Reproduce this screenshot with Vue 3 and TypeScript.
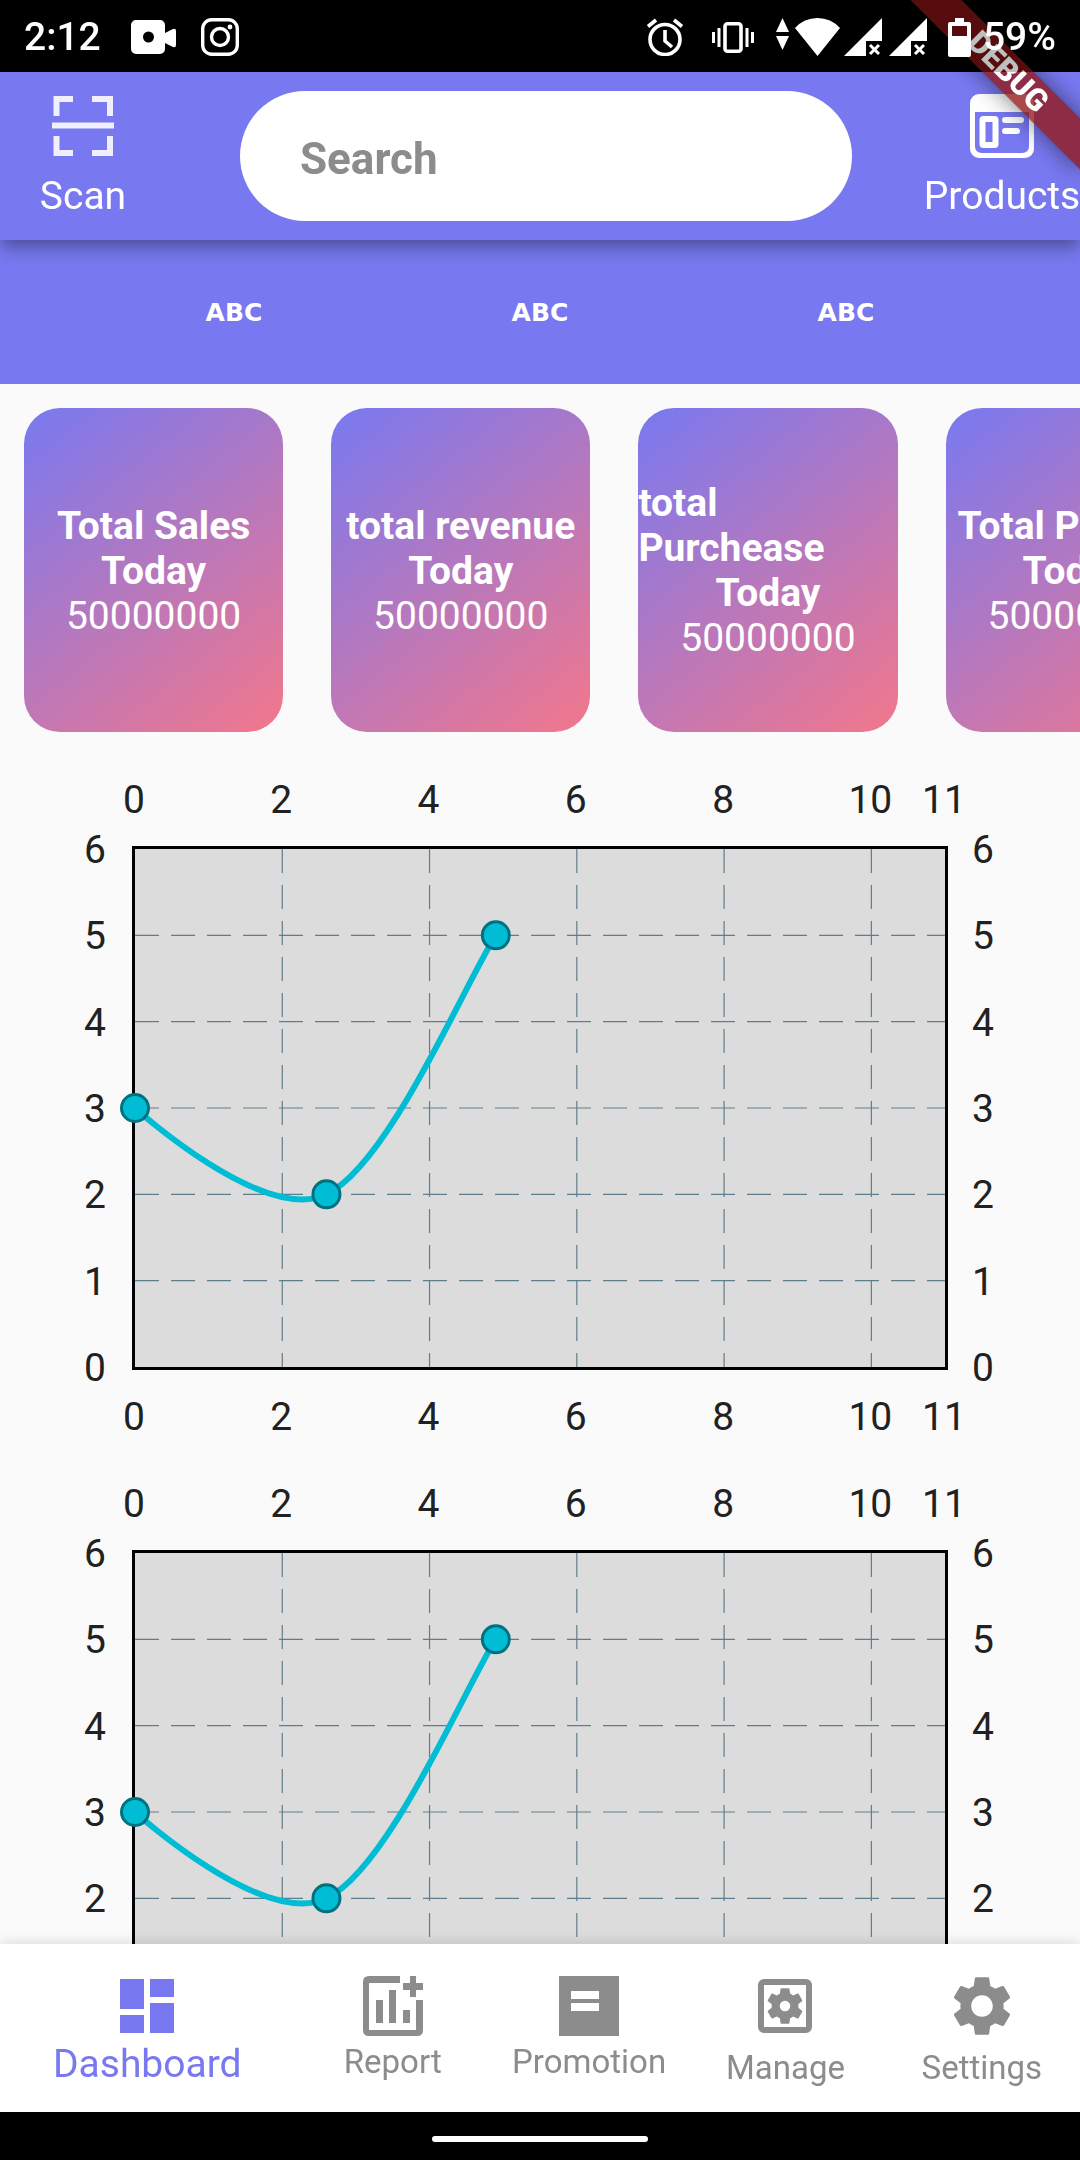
<script setup lang="ts">
import { ref } from 'vue'

interface Stat {
  title: string
  period: string
  value: string
}

interface NavItem {
  id: string
  label: string
}

const query = ref('')
const current = ref('dashboard')

const tabs = [1, 2, 3]

const stats: Stat[] = [
  { title: 'Total Sales', period: 'Today', value: '50000000' },
  { title: 'total revenue', period: 'Today', value: '50000000' },
  { title: 'total Purchease', period: 'Today', value: '50000000' },
  { title: 'Total Product', period: 'Today', value: '50000000' },
]

const navItems: NavItem[] = [
  { id: 'dashboard', label: 'Dashboard' },
  { id: 'report', label: 'Report' },
  { id: 'promotion', label: 'Promotion' },
  { id: 'manage', label: 'Manage' },
  { id: 'settings', label: 'Settings' },
]

const gearPath =
  'M19.14 12.94c.04-.3.06-.61.06-.94 0-.32-.02-.64-.07-.94l2.03-1.58c.18-.14.23-.41.12-.61l-1.92-3.32c-.12-.22-.37-.29-.59-.22l-2.39.96c-.5-.38-1.03-.7-1.62-.94l-.36-2.54c-.04-.24-.24-.41-.48-.41h-3.84c-.24 0-.43.17-.47.41l-.36 2.54c-.59.24-1.13.57-1.62.94l-2.39-.96c-.22-.08-.47 0-.59.22L2.74 8.87c-.12.21-.08.47.12.61l2.03 1.58c-.05.3-.09.63-.09.94s.02.64.07.94l-2.03 1.58c-.18.14-.23.41-.12.61l1.92 3.32c.12.22.37.29.59.22l2.39-.96c.5.38 1.03.7 1.62.94l.36 2.54c.05.24.24.41.48.41h3.84c.24 0 .44-.17.47-.41l.36-2.54c.59-.24 1.13-.56 1.62-.94l2.39.96c.22.08.47 0 .59-.22l1.92-3.32c.12-.22.07-.47-.12-.61l-2.01-1.58zM12 15.6c-1.98 0-3.6-1.62-3.6-3.6s1.62-3.6 3.6-3.6 3.6 1.62 3.6 3.6-1.62 3.6-3.6 3.6z'

// Chart geometry, in the units of the chart's viewBox
const plot = { left: 135, top: 93, width: 810, height: 518 }
const maxX = 11
const maxY = 6
const xTicks = [0, 2, 4, 6, 8, 10, 11]
const yTicks = [6, 5, 4, 3, 2, 1, 0]
const xGrid = [2, 4, 6, 8, 10]
const yGrid = [1, 2, 3, 4, 5]
const smoothness = 0.35

const sx = (v: number): number => plot.left + (v / maxX) * plot.width
const sy = (v: number): number => plot.top + plot.height - (v / maxY) * plot.height

const spots = [
  { x: sx(0), y: sy(3) },
  { x: sx(2.6), y: sy(2) },
  { x: sx(4.9), y: sy(5) },
]

function smoothPath(points: { x: number; y: number }[]): string {
  let d = `M${points[0].x} ${points[0].y}`
  let carry = { x: 0, y: 0 }
  for (let i = 1; i < points.length; i++) {
    const prev = points[i - 1]
    const cur = points[i]
    const next = points[Math.min(i + 1, points.length - 1)]
    const c1 = { x: prev.x + carry.x, y: prev.y + carry.y }
    carry = {
      x: ((next.x - prev.x) / 2) * smoothness,
      y: ((next.y - prev.y) / 2) * smoothness,
    }
    d += ` C${c1.x} ${c1.y} ${cur.x - carry.x} ${cur.y - carry.y} ${cur.x} ${cur.y}`
  }
  return d
}

const linePath = smoothPath(spots)
const charts = ['Sales chart', 'Revenue chart']
</script>

<template>
  <div class="app">
    <div class="status">
      <span class="clock">2:12</span>
      <svg class="st-cam" width="45" height="34" viewBox="0 0 45 34" fill="#fff" aria-hidden="true">
        <path fill-rule="evenodd" d="M5 0h24a5 5 0 0 1 5 5v8l8-4q3-1 3 2v14q0 3-3 2l-8-4v6a5 5 0 0 1-5 5H5a5 5 0 0 1-5-5V5a5 5 0 0 1 5-5zM17.500 11.500a5.500 5.500 0 1 0 0 11a5.500 5.500 0 1 0 0-11z" />
      </svg>
      <svg class="st-insta" width="38" height="38" viewBox="0 0 38 38" fill="none" stroke="#fff" aria-hidden="true">
        <rect x="1.700" y="1.700" width="34.600" height="34.600" rx="9" stroke-width="3.400" />
        <circle cx="19" cy="19" r="8.500" stroke-width="3.400" />
        <circle cx="29" cy="9" r="2.400" fill="#fff" stroke="none" />
      </svg>
      <span class="spacer"></span>
      <svg class="st-alarm" width="38" height="38" viewBox="0 0 38 38" fill="none" stroke="#fff" stroke-width="3.600" aria-hidden="true">
        <circle cx="19" cy="21.500" r="15" />
        <path d="M19 12v11l7 6M2 8.500L10 2M36 8.500L28 2" />
      </svg>
      <svg class="st-vibrate" width="42" height="31" viewBox="0 0 42 31" fill="none" stroke="#fff" aria-hidden="true">
        <rect x="13" y="1.800" width="16" height="27.400" rx="2.500" stroke-width="3.600" />
        <path d="M1.500 10v11M7 6v19M35 6v19M40.500 10v11" stroke-width="3" />
      </svg>
      <svg class="st-net" width="64" height="38" viewBox="0 0 64 38" fill="#fff" aria-hidden="true">
        <path d="M0 14L6.500 0L13 14zM0 18h13L6.500 32zM19 10Q28 0 41.500 0T64 10L41.500 38z" />
      </svg>
      <svg v-for="n in 2" :key="n" class="st-signal" width="38" height="38" viewBox="0 0 38 38" aria-hidden="true">
        <path d="M38 0v23H22v15H0z" fill="#fff" />
        <path d="M26 27l9 9M35 27l-9 9" fill="none" stroke="#fff" stroke-width="3" />
      </svg>
      <svg class="st-battery" width="23" height="39" viewBox="0 0 23 39" fill="#fff" aria-hidden="true">
        <path fill-rule="evenodd" d="M7 0h9v4h5q2 0 2 2v31q0 2-2 2H2q-2 0-2-2V6q0-2 2-2h5zM4 8v10h15V8z" />
      </svg>
      <span class="percent">59%</span>
    </div>

    <div class="banner"><span class="banner-text">DEBUG</span></div>

    <header class="appbar">
      <button class="action scan" type="button">
        <svg width="64" height="72" viewBox="0 0 64 72" fill="none" stroke="#fff" stroke-width="6" stroke-opacity=".88" aria-hidden="true">
          <path d="M5.500 26V9H22M41 9h18v17M5.500 46v17H22M41 63h18V46" />
          <path d="M1 35.500h62" />
        </svg>
        <span>Scan</span>
      </button>
      <input v-model="query" class="search" type="search" placeholder="Search" aria-label="Search" />
      <button class="action products" type="button">
        <svg width="64" height="72" viewBox="0 0 64 72" aria-hidden="true">
          <path fill="#fff" fill-rule="evenodd" d="M9 4h46a9 9 0 0 1 9 9v46a9 9 0 0 1-9 9H9a9 9 0 0 1-9-9V13a9 9 0 0 1 9-9zM5 22v34q0 7 7 7h40q7 0 7-7V22z" />
          <rect x="12.500" y="29" width="13" height="26" rx="1" fill="none" stroke="#fff" stroke-width="6" />
          <path d="M35 30h16M35 41h12" stroke="#fff" stroke-width="6" stroke-linecap="round" />
        </svg>
        <span>Products</span>
      </button>
    </header>

    <main class="content">
      <div class="tabs">
        <button v-for="t in tabs" :key="t" class="tab" type="button">ABC</button>
      </div>

      <section class="stats" aria-label="Totals">
        <article v-for="s in stats" :key="s.title" class="stat">
          <strong>{{ s.title }}</strong>
          <strong>{{ s.period }}</strong>
          <span>{{ s.value }}</span>
        </article>
      </section>

      <svg v-for="c in charts" :key="c" class="chart" viewBox="0 0 1080 704" role="img" :aria-label="c">
        <rect :x="plot.left" :y="plot.top" :width="plot.width" :height="plot.height" fill="#dcdcdc" />
        <g class="grid">
          <line v-for="x in xGrid" :key="'x' + x" :x1="sx(x)" :x2="sx(x)" :y1="plot.top" :y2="plot.top + plot.height" />
          <line v-for="y in yGrid" :key="'y' + y" :x1="plot.left" :x2="plot.left + plot.width" :y1="sy(y)" :y2="sy(y)" />
        </g>
        <rect class="frame" x="133.500" y="91.500" width="813" height="521" />
        <path class="line" :d="linePath" />
        <circle v-for="(p, i) in spots" :key="i" class="dot" :cx="p.x" :cy="p.y" r="13.500" />
        <g class="labels">
          <g v-for="x in xTicks" :key="'t' + x">
            <text :x="sx(x) - 1" y="57">{{ x }}</text>
            <text :x="sx(x) - 1" y="674">{{ x }}</text>
          </g>
          <g v-for="y in yTicks" :key="'s' + y">
            <text x="95" :y="sy(y) + 14">{{ y }}</text>
            <text x="983" :y="sy(y) + 14">{{ y }}</text>
          </g>
        </g>
      </svg>
    </main>

    <nav class="bottom">
      <button
        v-for="item in navItems"
        :key="item.id"
        class="nav-item"
        :class="{ active: item.id === current }"
        type="button"
        @click="current = item.id"
      >
        <svg v-if="item.id === 'dashboard'" width="72" height="72" viewBox="0 0 24 24" fill="currentColor" aria-hidden="true">
          <path d="M3 13h8V3H3v10zm0 8h8v-6H3v6zm10 0h8V11h-8v10zm0-18v6h8V3h-8z" />
        </svg>
        <svg v-else-if="item.id === 'report'" width="60" height="60" viewBox="0 0 60 60" fill="currentColor" aria-hidden="true">
          <path d="M6 0h31v7H6v47h47V24h7v30q0 6-6 6H6q-6 0-6-6V6q0-6 6-6z" />
          <path d="M13 24h7v23h-7zM26 14h7v33h-7zM40 34h7v13h-7zM47 0h6v7h7v7h-7v7h-6v-7h-7V7h7z" />
        </svg>
        <svg v-else-if="item.id === 'promotion'" width="60" height="60" viewBox="0 0 60 60" fill="currentColor" aria-hidden="true">
          <path fill-rule="evenodd" d="M0 0h60v60H0zM12 15v8h28v-8zM12 27v8h28v-8z" />
        </svg>
        <svg v-else-if="item.id === 'manage'" width="72" height="72" viewBox="0 0 24 24" fill="currentColor" aria-hidden="true">
          <path fill-rule="evenodd" d="M5 3h14a2 2 0 0 1 2 2v14a2 2 0 0 1-2 2H5a2 2 0 0 1-2-2V5a2 2 0 0 1 2-2zM5 5v14h14V5z" />
          <path :d="gearPath" transform="translate(12 12) scale(.62) translate(-12 -12)" />
          <circle cx="12" cy="12" r="2.100" fill="none" stroke="currentColor" stroke-width=".7" />
        </svg>
        <svg v-else width="72" height="72" viewBox="0 0 24 24" fill="currentColor" aria-hidden="true">
          <path :d="gearPath" />
        </svg>
        <span>{{ item.label }}</span>
      </button>
    </nav>

    <div class="gesture"><span class="pill"></span></div>
  </div>
</template>

<style>
body {
  margin: 0;
  background: #000;
}
</style>

<style scoped>
.app {
  position: relative;
  display: flex;
  flex-direction: column;
  height: 100vh;
  overflow: hidden;
  background: #000;
  font-family: Roboto, "Liberation Sans", sans-serif;
  font-size: 39px;
  line-height: 45px;
}

button {
  border: 0;
  padding: 0;
  background: none;
  color: inherit;
  font: inherit;
  cursor: pointer;
}

svg {
  display: block;
  flex: none;
}

/* The status bar dims whatever passes beneath it */
.status {
  position: relative;
  z-index: 4;
  flex: none;
  display: flex;
  align-items: center;
  box-sizing: border-box;
  height: 72px;
  padding: 2px 24px 0;
  background: rgba(0, 0, 0, 0.25);
  color: #fff;
  font-weight: 500;
}

.clock {
  margin-right: 30px;
}

.st-cam {
  margin-right: 25px;
}

.spacer {
  flex: 1;
}

.st-alarm {
  margin-right: 28px;
}

.st-vibrate {
  margin-right: 22px;
}

.st-net {
  margin-right: 4px;
}

.st-signal {
  margin-right: 7px;
}

.st-battery {
  margin: 0 12px 0 14px;
}

.banner {
  position: absolute;
  z-index: 3;
  top: 54px;
  right: -48px;
  width: 240px;
  height: 36px;
  transform: rotate(45deg);
  background: linear-gradient(rgba(183, 28, 28, 0.63), rgba(183, 28, 28, 0.63)), rgba(0, 0, 0, 0.4);
  box-shadow: 0 0 24px rgba(0, 0, 0, 0.5);
  color: #fff;
  font-size: 31px;
  font-weight: 900;
  line-height: 36px;
  text-align: center;
  pointer-events: none;
}

.appbar {
  position: relative;
  z-index: 2;
  flex: none;
  display: flex;
  align-items: center;
  height: 168px;
  background: #7879f1;
  box-shadow: 0 6px 12px -3px rgba(0, 0, 0, 0.2), 0 12px 15px rgba(0, 0, 0, 0.14),
    0 3px 30px rgba(0, 0, 0, 0.12);
  color: #fff;
}

.action {
  flex: none;
  display: flex;
  flex-direction: column;
  align-items: center;
  gap: 12px;
  padding-bottom: 4px;
}

.scan {
  width: 166px;
}

.products {
  width: 156px;
}

.search {
  flex: 1;
  min-width: 0;
  box-sizing: border-box;
  height: 130px;
  margin: 0 72px 0 74px;
  padding: 6px 60px 0;
  border: 0;
  border-radius: 65px;
  outline: 0;
  appearance: none;
  background: #fff;
  color: #212121;
  font: inherit;
  font-size: 44px;
  font-weight: 700;
}

.search::placeholder {
  color: #8c8c8c;
  opacity: 1;
}

.content {
  flex: 1;
  min-height: 0;
  overflow-x: hidden;
  overflow-y: auto;
  scrollbar-width: none;
  background: #fafafa;
}

.tabs {
  display: flex;
  height: 144px;
  padding: 0 7.5%;
  background: #7879f1;
}

.tab {
  flex: 1;
  color: #fff;
  font-family: "DejaVu Sans", sans-serif;
  font-size: 25px;
  font-weight: 700;
}

.stats {
  display: flex;
  gap: 48px;
  padding: 24px;
  overflow: hidden;
}

.stat {
  flex: none;
  display: flex;
  flex-direction: column;
  align-items: center;
  justify-content: center;
  box-sizing: border-box;
  width: 24vw;
  height: 324px;
  padding-top: 2px;
  border-radius: 36px;
  background: linear-gradient(141deg, #7879f1, #f3778b);
  color: #fff;
}

.chart {
  width: 100%;
  height: auto;
}

.grid {
  stroke: #607d8b;
  stroke-width: 1.2;
  stroke-dasharray: 24 12;
}

.frame {
  fill: none;
  stroke: #000;
  stroke-width: 3;
}

.line {
  fill: none;
  stroke: #00bcd4;
  stroke-width: 6;
}

.dot {
  fill: #00bcd4;
  stroke: #00717f;
  stroke-width: 3;
}

.labels {
  fill: #212121;
  font-size: 39px;
  text-anchor: middle;
}

.bottom {
  position: relative;
  z-index: 2;
  flex: none;
  display: grid;
  grid-template-columns: 3fr 2fr 2fr 2fr 2fr;
  height: 168px;
  background: #fff;
  box-shadow: 0 -2px 12px rgba(0, 0, 0, 0.12);
}

.nav-item {
  display: flex;
  flex-direction: column;
  align-items: center;
  justify-content: center;
  gap: 6px;
  min-width: 0;
  color: #8c8c8c;
  font-size: 33px;
  line-height: 39px;
}

.nav-item.active {
  gap: 0;
  color: #7879f1;
  font-size: 39px;
  line-height: 45px;
}

.gesture {
  position: relative;
  z-index: 2;
  flex: none;
  display: flex;
  align-items: center;
  justify-content: center;
  box-sizing: border-box;
  height: 48px;
  padding-top: 6px;
  background: #000;
}

.pill {
  width: 20%;
  height: 6px;
  border-radius: 3px;
  background: #fff;
}
</style>
